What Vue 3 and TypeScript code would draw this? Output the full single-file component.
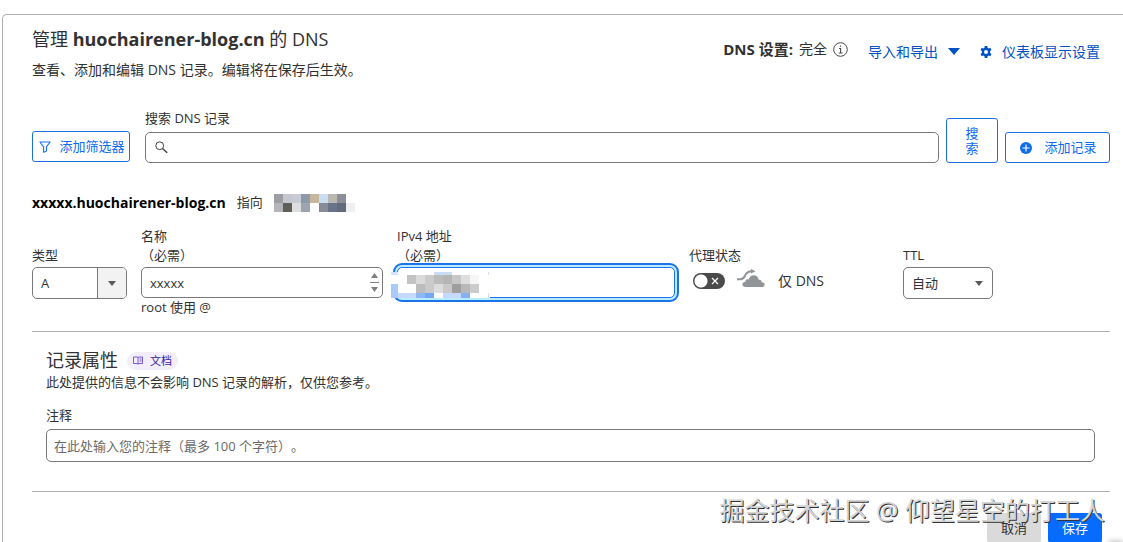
<script setup lang="ts">
import { ref } from 'vue'

interface Cell {
  x: number
  y: number
  w: number
  h: number
  c: string
}

const domain = 'huochairener-blog.cn'
const recordType = ref('A')
const recordName = ref('xxxxx')
const address = ref('')
const proxied = ref(false)
const ttl = ref('自动')
const keyword = ref('')
const comment = ref('')

const row = (y: number, h: number, start: number, colors: string[]): Cell[] =>
  colors.map((c, i) => ({ x: start + i * 9, y, w: 9, h, c })).filter((k) => k.c !== '')

const targetMask: Cell[] = [
  ...row(0, 9, 0, ['#9d9ea1', '#c5c8d3', '#c8cbd6', '#8e98a9', '#c6b69b', '#cbddf0', '#b9b8b1', '#8b8f99']),
  ...row(9, 9, 0, ['#b4b5b8', '#5f5e58', '#dddedf', '#9ca4b0', '', '#868b95', '#69748a', '#626a7b', '#f0f0f0']),
]

const addressMask: Cell[] = [
  { x: 0, y: 0, w: 7, h: 3, c: '#d3e3fb' },
  { x: 43, y: 0, w: 18, h: 3, c: '#c9dbf6' },
  ...row(3, 9, 16, ['#c4c3c3', '#dbdbdb', '#cbcaca', '#bcbbbb', '#b6b5b5', '#c8c7c7', '#dedede', '#f6f6f6']),
  ...row(12, 9, 25, ['#bdbcbc', '#cbcaca', '#dddddd', '#cac9c9', '#9f9e9e', '#b9b8b8', '#cccbcb']),
  { x: 0, y: 12, w: 7, h: 14, c: '#a9cbfa' },
  { x: 7, y: 21, w: 18, h: 5, c: '#c4d9fb' },
  { x: 25, y: 21, w: 9, h: 5, c: '#8fb7f6' },
  { x: 34, y: 21, w: 9, h: 5, c: '#73a6f5' },
  { x: 52, y: 21, w: 18, h: 5, c: '#c4d9fb' },
  { x: 70, y: 21, w: 9, h: 5, c: '#86b0f5' },
  { x: 97, y: 0, w: 1, h: 3, c: '#cfdcfb' },
  { x: 97, y: 21, w: 1, h: 5, c: '#cfdcfb' },
]
</script>

<template>
  <main class="panel">
    <header class="top">
      <div>
        <h1>管理 <b>{{ domain }}</b> 的 DNS</h1>
        <p class="lead">查看、添加和编辑 DNS 记录。编辑将在保存后生效。</p>
      </div>
      <nav class="tools">
        <span class="mode">
          <b>DNS 设置:</b> 完全
          <svg width="15" height="15" viewBox="0 0 15 15" aria-hidden="true">
            <circle cx="7.5" cy="7.5" r="6.8" fill="none" stroke="#4a4a4a" />
            <path d="M7.5 3.4v1.4M6 6.5h1.6v4.5M5.7 11h3.8" fill="none" stroke="#4a4a4a" stroke-width="1.1" />
          </svg>
        </span>
        <button type="button" class="link">
          导入和导出
          <svg width="12" height="7" viewBox="0 0 12 7" aria-hidden="true"><path d="M0 0h12L6 7z" fill="#0051c3" /></svg>
        </button>
        <a href="#display" class="link">
          <svg width="12" height="12" viewBox="0 0 24 24" aria-hidden="true">
            <path
              fill="#0051c3"
              fill-rule="evenodd"
              d="M9.5 0h5l.6 3.6 2 1.2 3.4-1.3L23 7.9l-2.8 2.3v3.6l2.8 2.3-2.5 4.4-3.4-1.3-2 1.2-.6 3.6h-5l-.6-3.6-2-1.2-3.4 1.3L1 16.1l2.8-2.3v-3.6L1 7.900l2.500-4.400 3.400 1.300 2-1.200zM12 8a4 4 0 1 0 0 8 4 4 0 0 0 0-8z"
            />
          </svg>
          仪表板显示设置
        </a>
      </nav>
    </header>

    <form class="search" @submit.prevent>
      <button type="button" class="outline filter">
        <svg width="12" height="12" viewBox="0 0 12 12" aria-hidden="true">
          <path d="M.9 1h10.200L7.400 5.900v4.300l-2.800 1V5.900z" fill="none" stroke="#1a73e8" stroke-width="1.100" stroke-linejoin="round" />
        </svg>
        添加筛选器
      </button>
      <div class="query">
        <label for="q">搜索 DNS 记录</label>
        <div class="wrap">
          <input id="q" v-model="keyword" type="text" class="box" />
          <svg class="lens" width="13" height="13" viewBox="0 0 13 13" aria-hidden="true">
            <circle cx="4.700" cy="4.700" r="3.900" fill="none" stroke="#404040" />
            <path d="M7.500 7.500l4.700 4.300" stroke="#404040" stroke-width="1.500" />
          </svg>
        </div>
      </div>
      <div class="actions">
        <button type="submit" class="outline find">搜索</button>
        <button type="button" class="outline add">
          <svg width="12" height="12" viewBox="0 0 12 12" aria-hidden="true">
            <circle cx="6" cy="6" r="6" fill="#0d6bf0" />
            <path d="M6 2.500v7M2.500 6h7" stroke="#fff" stroke-width="1.200" />
          </svg>
          添加记录
        </button>
      </div>
    </form>

    <h2 class="summary">
      <b>xxxxx.{{ domain }}</b> 指向
      <svg width="81" height="18" viewBox="0 0 81 18" shape-rendering="crispEdges" aria-hidden="true">
        <rect v-for="(k, i) in targetMask" :key="i" :x="k.x" :y="k.y" :width="k.w" :height="k.h" :fill="k.c" />
      </svg>
    </h2>

    <form class="fields" @submit.prevent>
      <div class="field">
        <label for="type">类型</label>
        <div class="wrap">
          <select id="type" v-model="recordType" class="box tall"><option>A</option></select>
          <span class="split"><svg width="10" height="5" viewBox="0 0 10 5" aria-hidden="true"><path d="M1 0h8L5 5z" fill="#595959" /></svg></span>
        </div>
      </div>
      <div class="field">
        <label for="name"><span>名称</span><span>（必需）</span></label>
        <div class="wrap">
          <input id="name" v-model="recordName" type="text" class="box" />
          <svg class="stepper" width="9" height="21" viewBox="0 0 9 21" aria-hidden="true">
            <path d="M1 6l3.500-5L8 6zM1 15l3.500 5L8 15z" fill="#808080" />
            <path d="M0 10.500h9" stroke="#808080" />
          </svg>
        </div>
        <p class="hint">root 使用 @</p>
      </div>
      <div class="field">
        <label for="ip"><span>IPv4 地址</span><span>（必需）</span></label>
        <div class="wrap">
          <input id="ip" v-model="address" type="text" class="box active" />
          <svg class="mask-ip" width="99" height="26" viewBox="0 0 99 26" shape-rendering="crispEdges" aria-hidden="true">
            <rect width="99" height="26" fill="#fff" />
            <rect v-for="(k, i) in addressMask" :key="i" :x="k.x" :y="k.y" :width="k.w" :height="k.h" :fill="k.c" />
          </svg>
        </div>
      </div>
      <div class="field">
        <label for="proxy">代理状态</label>
        <div class="proxy">
          <span class="toggle">
            <input id="proxy" v-model="proxied" type="checkbox" />
            <svg width="8" height="8" viewBox="0 0 8 8" aria-hidden="true"><path d="M1 1l6 6M7 1L1 7" stroke="#fff" stroke-width="1.200" /></svg>
          </span>
          <svg class="cloud" width="28" height="19" viewBox="0 0 28 19" aria-hidden="true">
            <path d="M0 10.300h3.500c3.500 0 3.800-2.300 5.300-5C10.200 2.900 11.500 2.200 14.500 2.200" fill="none" stroke="#929598" stroke-width="2" />
            <path d="M14 0l4.500 2.200L14 4.400z" fill="#929598" />
            <path d="M8.500 18c-4 0-4.500-5 0-5.300 0-2 1.500-2.700 3.300-2.200C12.300 8 14 6.300 16.500 6.300c3 0 4.900 1.900 5.200 4.500 2-.3 3 .8 3 2.400 3.800 0 4 4.800.5 4.800z" fill="#929598" />
          </svg>
          <span>仅 DNS</span>
        </div>
      </div>
      <div class="field">
        <label for="ttl">TTL</label>
        <div class="wrap ttl">
          <select id="ttl" v-model="ttl" class="box tall"><option>自动</option></select>
          <svg class="caret" width="8" height="5" viewBox="0 0 8 5" aria-hidden="true"><path d="M0 0h8L4 5z" fill="#595959" /></svg>
        </div>
      </div>
    </form>

    <section class="attrs">
      <h2>
        记录属性
        <a href="#docs" class="docs">
          <svg width="10" height="9" viewBox="0 0 10 9" aria-hidden="true">
            <path d="M.5 1h3.500l1 .5 1-.5h3.500v6.500H6l-1 .7-1-.7H.5zM5 1.500v6.500M6.500 3h2M6.500 5h2" fill="none" stroke="#5a35c9" stroke-width=".8" />
          </svg>
          文档
        </a>
      </h2>
      <p>此处提供的信息不会影响 DNS 记录的解析，仅供您参考。</p>
      <label for="note">注释</label>
      <input id="note" v-model="comment" type="text" class="box note" placeholder="在此处输入您的注释（最多 100 个字符）。" />
    </section>

    <footer class="foot">
      <button type="button" class="cancel">取消</button>
      <button type="button" class="save">保存</button>
      <span class="watermark">掘金技术社区 @ 仰望星空的打工人</span>
    </footer>
    <div class="corner"></div>
  </main>
</template>

<style>
html {
  overflow: hidden;
  background: #fff;
}
</style>

<style scoped>
.panel,
.panel * {
  box-sizing: border-box;
}
.panel {
  margin: 14px 0 0 2px;
  padding: 13px 13px 0 29px;
  border: 1px solid #b0b0b0;
  border-width: 1px 0 0 1px;
  border-radius: 5px 0 0 0;
  color: #313131;
  font: 13px/19px 'Open Sans', 'Noto Sans CJK SC', sans-serif;
  text-spacing-trim: space-all;
}
h1,
h2,
p {
  margin: 0;
  font-weight: 400;
}
button,
input,
select {
  margin: 0;
  font: inherit;
  color: inherit;
}
button {
  padding: 0;
  border: 0;
  background: none;
  cursor: pointer;
}
label {
  display: block;
}
.top {
  display: flex;
  justify-content: space-between;
  align-items: flex-start;
}
h1 {
  font-size: 18px;
  line-height: 22px;
}
.lead {
  margin-top: 9px;
  font-size: 14px;
  line-height: 22px;
}
.tools {
  display: flex;
  align-items: center;
  gap: 20px;
  padding: 10px 10px 0 0;
  font-size: 14px;
  line-height: 22px;
}
.mode {
  display: flex;
  align-items: center;
  gap: 6px;
  padding-bottom: 5px;
}
.mode b {
  font-size: 15px;
}
.link {
  display: flex;
  align-items: center;
  gap: 10px;
  color: #0051c3;
  text-decoration: none;
}
.search {
  display: flex;
  align-items: flex-end;
  margin-top: 28px;
}
.outline {
  display: flex;
  align-items: center;
  justify-content: center;
  height: 31px;
  border: 1px solid #1a6fe0;
  border-radius: 3px;
  background: #fff;
  color: #0d6bf0;
}
.filter {
  width: 98px;
  gap: 8px;
  padding-left: 2px;
  margin-bottom: 1px;
}
.query {
  flex: 1;
  margin: 0 7px 0 15px;
}
.query label {
  margin-bottom: 4px;
}
.actions {
  display: flex;
  align-items: flex-end;
  gap: 7px;
}
.find {
  width: 52px;
  height: 45px;
  padding: 0 18px;
  line-height: 15px;
}
.add {
  width: 105px;
  gap: 12px;
  padding-left: 2px;
}
.wrap {
  position: relative;
}
.box {
  display: block;
  width: 100%;
  height: 31px;
  padding: 0 8px;
  border: 1px solid #797979;
  border-radius: 5px;
  outline: 0;
  background: #fff;
  appearance: none;
}
.tall {
  height: 32px;
}
.lens {
  position: absolute;
  left: 10px;
  top: 9px;
}
.summary {
  display: flex;
  align-items: center;
  gap: 11px;
  margin-top: 30px;
  font-size: 13px;
  line-height: 19px;
}
.summary b {
  color: #000;
  font-size: 14px;
}
.fields {
  display: grid;
  grid-template-columns: 95px minmax(0, 242fr) minmax(0, 278fr) 200px 207px;
  column-gap: 14px;
  margin-top: 15px;
  padding-bottom: 14px;
  border-bottom: 1px solid #b0b0b0;
}
.field label {
  display: flex;
  flex-direction: column;
  justify-content: flex-end;
  height: 38px;
  margin-bottom: 2px;
}
.split {
  position: absolute;
  top: 1px;
  right: 1px;
  bottom: 1px;
  display: flex;
  align-items: center;
  justify-content: center;
  width: 29px;
  border-left: 1px solid #797979;
  border-radius: 0 4px 4px 0;
  background: #f2f2f2;
  pointer-events: none;
}
.stepper {
  position: absolute;
  right: 4px;
  top: 5px;
}
.hint {
  line-height: 19px;
}
.active {
  border-color: #1a73e8;
  box-shadow: 0 0 0 2px #b9ecff, 0 0 0 4px #1a73e8;
}
.mask-ip {
  position: absolute;
  left: -6px;
  top: 5px;
}
.proxy {
  display: flex;
  align-items: center;
  padding-left: 4px;
  height: 27px;
  font-size: 14px;
}
.toggle {
  position: relative;
  width: 32px;
  height: 16px;
}
.toggle input {
  display: block;
  width: 32px;
  height: 16px;
  border-radius: 8px;
  background: radial-gradient(circle at 8px 8px, #fff 6px, #4a4a4a 7px);
  appearance: none;
}
.toggle svg {
  position: absolute;
  right: 6px;
  top: 4px;
}
.cloud {
  margin: 0 13px 4px 12px;
}
.ttl {
  width: 90px;
}
.caret {
  position: absolute;
  right: 10px;
  top: 14px;
}
.attrs {
  padding: 16px 15px 29px 14px;
  border-bottom: 1px solid #b0b0b0;
}
.attrs h2 {
  display: flex;
  align-items: center;
  gap: 9px;
  font-size: 18px;
  line-height: 25px;
}
.docs {
  display: flex;
  align-items: center;
  gap: 7px;
  height: 18px;
  padding: 0 6px;
  border-radius: 9px;
  background: #f2eefc;
  color: #3c1a9d;
  font-size: 11px;
  line-height: 18px;
  text-decoration: none;
}
.attrs label {
  margin: 14px 0 4px;
}
.note {
  height: 33px;
  padding: 0 7px;
}
.note::placeholder {
  color: #6a6a6a;
  opacity: 1;
}
.foot {
  position: relative;
  display: flex;
  justify-content: flex-end;
  gap: 7px;
  padding: 21px 8px 0 0;
}
.foot button {
  width: 54px;
  height: 30px;
  border-radius: 3px;
}
.cancel {
  background: #dadada;
}
.foot .save {
  background: #056cff;
  color: #fff;
}
.watermark {
  position: absolute;
  right: 5px;
  top: 0;
  color: #d4d4d4;
  font-size: 25px;
  line-height: 36px;
  white-space: nowrap;
  text-shadow: 1px 1px 0 #333;
  pointer-events: none;
}
.corner {
  position: fixed;
  right: 0;
  bottom: -10px;
  width: 14px;
  height: 10px;
  box-shadow: 0 0 6px 0 #aaa;
  pointer-events: none;
}
</style>
